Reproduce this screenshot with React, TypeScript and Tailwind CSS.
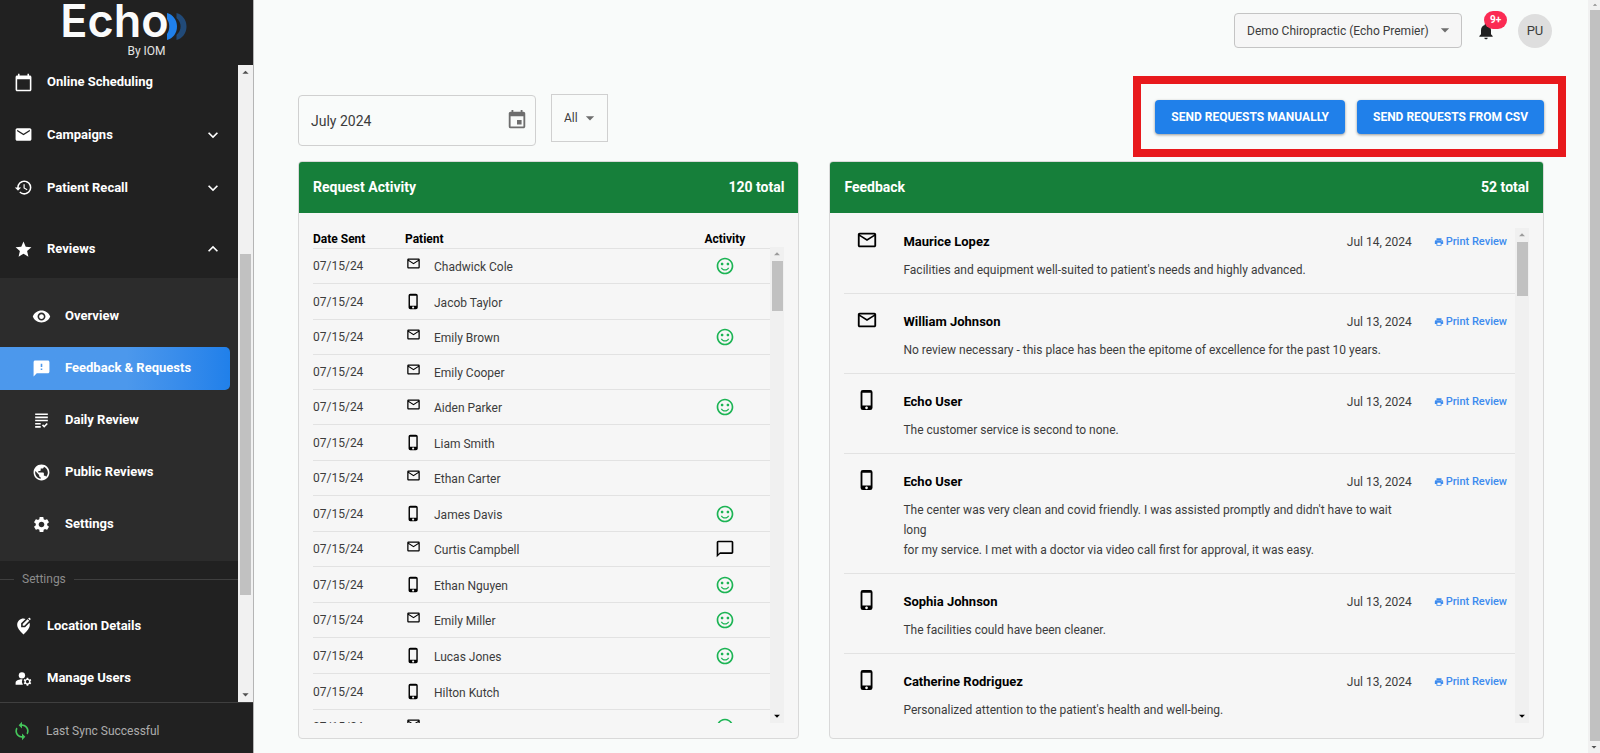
import type { ReactNode } from "react";
import type { IconType } from "react-icons";
import {
  MdArrowDropDown,
  MdArrowDropUp,
  MdCalendarToday,
  MdChatBubbleOutline,
  MdEditLocationAlt,
  MdEmail,
  MdEvent,
  MdExpandLess,
  MdExpandMore,
  MdFeedback,
  MdGrading,
  MdHistory,
  MdLoop,
  MdMailOutline,
  MdManageAccounts,
  MdNotifications,
  MdPhoneIphone,
  MdPrint,
  MdPublic,
  MdSentimentSatisfiedAlt,
  MdSettings,
  MdStar,
  MdVisibility,
} from "react-icons/md";

type Channel = "mail" | "phone";
type Activity = "happy" | "comment" | null;

const requests: { name: string; channel: Channel; activity: Activity }[] = [
  { name: "Chadwick Cole", channel: "mail", activity: "happy" },
  { name: "Jacob Taylor", channel: "phone", activity: null },
  { name: "Emily Brown", channel: "mail", activity: "happy" },
  { name: "Emily Cooper", channel: "mail", activity: null },
  { name: "Aiden Parker", channel: "mail", activity: "happy" },
  { name: "Liam Smith", channel: "phone", activity: null },
  { name: "Ethan Carter", channel: "mail", activity: null },
  { name: "James Davis", channel: "phone", activity: "happy" },
  { name: "Curtis Campbell", channel: "mail", activity: "comment" },
  { name: "Ethan Nguyen", channel: "phone", activity: "happy" },
  { name: "Emily Miller", channel: "mail", activity: "happy" },
  { name: "Lucas Jones", channel: "phone", activity: "happy" },
  { name: "Hilton Kutch", channel: "phone", activity: null },
  { name: "Ava Perez", channel: "mail", activity: "happy" },
];

const feedback: { name: string; channel: Channel; date: string; text: string }[] = [
  {
    name: "Maurice Lopez",
    channel: "mail",
    date: "Jul 14, 2024",
    text: "Facilities and equipment well-suited to patient's needs and highly advanced.",
  },
  {
    name: "William Johnson",
    channel: "mail",
    date: "Jul 13, 2024",
    text: "No review necessary - this place has been the epitome of excellence for the past 10 years.",
  },
  {
    name: "Echo User",
    channel: "phone",
    date: "Jul 13, 2024",
    text: "The customer service is second to none.",
  },
  {
    name: "Echo User",
    channel: "phone",
    date: "Jul 13, 2024",
    text: "The center was very clean and covid friendly. I was assisted promptly and didn't have to wait long\nfor my service. I met with a doctor via video call first for approval, it was easy.",
  },
  {
    name: "Sophia Johnson",
    channel: "phone",
    date: "Jul 13, 2024",
    text: "The facilities could have been cleaner.",
  },
  {
    name: "Catherine Rodriguez",
    channel: "phone",
    date: "Jul 13, 2024",
    text: "Personalized attention to the patient's health and well-being.",
  },
];

function NavLink({ icon: Icon, label, expand }: { icon: IconType; label: string; expand?: "more" | "less" }) {
  const content = (
    <>
      <Icon className="size-[19px] shrink-0" />
      <span className="grow text-left">{label}</span>
      {expand === "more" && <MdExpandMore className="size-5" />}
      {expand === "less" && <MdExpandLess className="size-5" />}
    </>
  );
  const style = "flex h-full w-full items-center gap-3.5 pl-3.5 pr-[15px]";
  return expand ? (
    <button type="button" aria-expanded={expand === "less"} className={style}>
      {content}
    </button>
  ) : (
    <a href="#" className={style}>
      {content}
    </a>
  );
}

function SubLink({ icon: Icon, label, active }: { icon: IconType; label: string; active?: boolean }) {
  return (
    <li className="flex h-[52px] items-center">
      <a
        href="#"
        aria-current={active ? "page" : undefined}
        className={
          active
            ? "mr-2 flex h-[43px] grow items-center gap-3.5 rounded-r-[5px] bg-linear-to-r from-[#4c98ec] from-55% to-[#2080ea] pl-8"
            : "mr-2 flex h-[43px] grow items-center gap-3.5 pl-8"
        }
      >
        <Icon className="size-[19px] shrink-0" />
        {label}
      </a>
    </li>
  );
}

function Logo() {
  return (
    <div className="flex h-[65px] shrink-0 flex-col items-center">
      <div className="flex h-[42px] items-center pr-1.5">
        <span className="font-[Inter] text-[45px] leading-[42px] font-semibold text-[#fafbfb]">Echo</span>
        <svg viewBox="0 0 20 27" className="mt-2.5 -ml-0.5 h-[27px] w-5" aria-hidden="true">
          <path d="M0 0C6 1.500 10 7 10 13.500S6 25.500 0 27v-6c3-4.500 3-10.500 0-15z" fill="#2080ea" />
          <path d="M9.500 0c6 1.500 10 7 10 13.500s-4 12-10 13.500v-5c5.500-5 5.500-12 0-17z" fill="#214a78" />
        </svg>
      </div>
      <span className="mt-px ml-[40px] text-[12px] leading-4 text-[#e4e4e4]">By IOM</span>
    </div>
  );
}

function Sidebar() {
  return (
    <aside className="flex w-[254px] shrink-0 flex-col border-r border-[#b5b5b5] bg-[#212121] text-white">
      <Logo />
      <div className="flex min-h-0 grow">
        <nav className="grow overflow-hidden text-[13px] font-bold">
          <div className="mb-[9px] h-[34px]">
            <NavLink icon={MdCalendarToday} label="Online Scheduling" />
          </div>
          <div className="h-[53px]">
            <NavLink icon={MdEmail} label="Campaigns" expand="more" />
          </div>
          <div className="h-[53px]">
            <NavLink icon={MdHistory} label="Patient Recall" expand="more" />
          </div>
          <div className="mt-1.5 h-[58px]">
            <NavLink icon={MdStar} label="Reviews" expand="less" />
          </div>
          <ul className="bg-[#2c2c2c] pt-3 pb-[11px]">
            <SubLink icon={MdVisibility} label="Overview" />
            <SubLink icon={MdFeedback} label="Feedback & Requests" active />
            <SubLink icon={MdGrading} label="Daily Review" />
            <SubLink icon={MdPublic} label="Public Reviews" />
            <SubLink icon={MdSettings} label="Settings" />
          </ul>
          <div className="mb-[3px] flex h-9 items-center gap-2 text-[12px] font-normal text-[#8c8c8c]">
            <span className="h-px w-3.5 bg-[#3f3f3f]" />
            Settings
            <span className="h-px grow bg-[#3f3f3f]" />
          </div>
          <div className="h-[52px]">
            <NavLink icon={MdEditLocationAlt} label="Location Details" />
          </div>
          <div className="h-[52px]">
            <NavLink icon={MdManageAccounts} label="Manage Users" />
          </div>
        </nav>
        <div className="flex w-[15px] shrink-0 flex-col items-center bg-[#f1f1f1]" aria-hidden="true">
          <MdArrowDropUp className="size-[15px] shrink-0 text-[#505050]" />
          <div className="h-[174px]" />
          <div className="h-[341px] w-[11px] bg-[#c1c1c1]" />
          <MdArrowDropDown className="mt-auto size-[15px] shrink-0 text-[#505050]" />
        </div>
      </div>
      <div className="flex h-[51px] shrink-0 items-center gap-3.5 border-t border-[#3f3f3f] pt-1.5 pl-3 text-[12px] text-[#adadad]">
        <MdLoop className="size-5 text-[#45c75b]" />
        Last Sync Successful
      </div>
    </aside>
  );
}

function ChannelIcon({ channel, large }: { channel: Channel; large?: boolean }) {
  if (channel === "mail") {
    return <MdMailOutline title="Email" className={large ? "-mt-1 size-[22px]" : "-mt-1.5 size-[15px]"} />;
  }
  return <MdPhoneIphone title="Text message" className={large ? "-mt-1 size-[22px]" : "size-[19px]"} />;
}

function ListScrollbar({ thumb }: { thumb: ReactNode }) {
  return (
    <div className="flex w-[14px] shrink-0 flex-col items-center bg-[#f0f0f0]" aria-hidden="true">
      <MdArrowDropUp className="size-3.5 shrink-0 text-[#9b9b9b]" />
      {thumb}
      <MdArrowDropDown className="mt-auto size-3.5 shrink-0 text-black" />
    </div>
  );
}

function CardHeader({ title, total }: { title: string; total: string }) {
  return (
    <header className="flex h-[51px] shrink-0 items-center justify-between bg-[#167f3a] px-3.5 text-[14px] font-bold text-white">
      <h2>{title}</h2>
      <span>{total}</span>
    </header>
  );
}

function RequestActivity() {
  return (
    <section className="flex min-h-0 flex-col overflow-hidden rounded-[4px] border border-[#d9d9d9] bg-[#f6f6f6]">
      <CardHeader title="Request Activity" total="120 total" />
      <div className="mr-3.5 mb-[15px] ml-3.5 flex min-h-0 grow pt-[15px]">
        <div className="min-h-0 grow overflow-hidden">
          <table className="w-full table-fixed border-collapse text-[12px] text-[#3c3c3c]">
            <colgroup>
              <col className="w-[92px]" />
              <col className="w-[29px]" />
              <col />
              <col className="w-[91px]" />
            </colgroup>
            <thead className="text-black">
              <tr className="h-5 border-b border-[#e2e2e2]">
                <th className="p-0 pt-0.5 text-left font-bold">Date Sent</th>
                <th colSpan={2} className="p-0 pt-0.5 text-left font-bold">
                  Patient
                </th>
                <th className="p-0 pt-0.5 text-center font-bold">Activity</th>
              </tr>
            </thead>
            <tbody>
              {requests.map((r) => (
                <tr
                  key={r.name}
                  className={r.channel === "phone" ? "h-9 border-b border-[#e2e2e2]" : "h-[35px] border-b border-[#e2e2e2]"}
                >
                  <td className="p-0">07/15/24</td>
                  <td className="p-0 text-black">
                    <div className="flex w-[17px] justify-center">
                      <ChannelIcon channel={r.channel} />
                    </div>
                  </td>
                  <td className="p-0 pt-0.5">{r.name}</td>
                  <td className="p-0">
                    {r.activity === "happy" && (
                      <MdSentimentSatisfiedAlt title="Positive" className="mx-auto size-5 text-[#1cb454]" />
                    )}
                    {r.activity === "comment" && (
                      <MdChatBubbleOutline title="Comment" className="mx-auto size-5 text-black" />
                    )}
                  </td>
                </tr>
              ))}
            </tbody>
          </table>
        </div>
        <div className="flex pt-[19px]">
          <ListScrollbar thumb={<div className="h-[50px] w-[11px] bg-[#c1c1c1]" />} />
        </div>
      </div>
    </section>
  );
}

function Feedback() {
  return (
    <section className="flex min-h-0 flex-col overflow-hidden rounded-[4px] border border-[#d9d9d9] bg-[#f6f6f6]">
      <CardHeader title="Feedback" total="52 total" />
      <div className="mr-3.5 mb-[15px] ml-3.5 flex min-h-0 grow">
        <ul className="min-h-0 grow overflow-hidden pt-px">
          {feedback.map((f, i) => (
            <li key={i} className="flex border-b border-[#e2e2e2] pt-[18px] pr-2 pb-[13px]">
              <div className="flex h-5 w-[59px] shrink-0 items-center pl-3 text-black">
                <ChannelIcon channel={f.channel} large />
              </div>
              <div className="grow">
                <div className="flex h-5 items-center">
                  <h3 className="grow text-[13px] font-bold text-black">{f.name}</h3>
                  <time className="text-[12px] text-[#3c3c3c]">{f.date}</time>
                  <button type="button" className="ml-[22px] flex items-center gap-0.5 text-[11px] font-medium text-[#3d8bee]">
                    <MdPrint className="size-2.5" />
                    Print Review
                  </button>
                </div>
                <p className="mt-2 max-w-[510px] text-[12px] leading-5 whitespace-pre-line text-[#3c3c3c]">{f.text}</p>
              </div>
            </li>
          ))}
        </ul>
        <div className="flex pt-[15px]">
          <ListScrollbar thumb={<div className="h-[54px] w-[11px] bg-[#c1c1c1]" />} />
        </div>
      </div>
    </section>
  );
}

function TopBar() {
  return (
    <div className="flex h-[61px] shrink-0 items-center justify-end pr-9">
      <div className="relative">
        <select
          aria-label="Location"
          className="h-[35px] w-[228px] appearance-none rounded-[4px] border border-[#c4c4c4] bg-[#f6f6f6] pl-3 text-[12px] text-[#3c3c3c]"
        >
          <option>Demo Chiropractic (Echo Premier)</option>
        </select>
        <MdArrowDropDown className="pointer-events-none absolute top-[7px] right-[7px] size-5 text-[#6e6e6e]" />
      </div>
      <button type="button" aria-label="Notifications" className="relative ml-3.5 text-[#212121]">
        <MdNotifications className="size-5" />
        <span className="absolute -top-2.5 left-2 flex h-[18px] w-[23px] items-center justify-center rounded-full bg-[#fb2b53] text-[10px] font-bold text-white">
          9+
        </span>
      </button>
      <button
        type="button"
        aria-label="Account"
        className="ml-[22px] flex size-[34px] items-center justify-center rounded-full bg-[#dedede] text-[13px] text-[#3c3c3c]"
      >
        PU
      </button>
    </div>
  );
}

function Toolbar() {
  const button =
    "h-[34px] rounded-[4px] bg-[#2080ea] px-4 text-[12px] font-bold text-white shadow-[0_1px_3px_rgba(0,0,0,0.4)]";
  return (
    <div className="flex h-[100px] shrink-0 items-start pt-[33px]">
      <div className="relative mt-px w-[238px]">
        <input
          aria-label="Month"
          defaultValue="July 2024"
          className="h-[51px] w-full rounded-[4px] border border-[#d0d0d0] bg-transparent pl-3 text-[14px] text-[#3c3c3c]"
        />
        <MdEvent className="pointer-events-none absolute top-3.5 right-2 size-[22px] text-[#6e6e6e]" />
      </div>
      <div className="relative ml-[15px]">
        <select
          aria-label="Filter"
          className="h-12 w-[57px] appearance-none border border-[#d0d0d0] bg-transparent pl-3 text-[12px] text-[#3c3c3c]"
        >
          <option>All</option>
        </select>
        <MdArrowDropDown className="pointer-events-none absolute top-3.5 right-2 size-5 text-[#6e6e6e]" />
      </div>
      <div className="relative mt-1.5 ml-auto flex gap-3">
        <button type="button" className={button}>
          SEND REQUESTS MANUALLY
        </button>
        <button type="button" className={button}>
          SEND REQUESTS FROM CSV
        </button>
        <div className="pointer-events-none absolute -inset-x-[22px] -top-6 -bottom-[23px] border-8 border-[#e8191c]" />
      </div>
    </div>
  );
}

export default function App() {
  return (
    <div className="flex h-screen overflow-hidden bg-[#f9fbfa] font-[Roboto,sans-serif]">
      <Sidebar />
      <main className="flex min-w-0 grow flex-col pl-11">
        <TopBar />
        <div className="mr-11 flex min-h-0 grow flex-col">
          <Toolbar />
          <div className="mb-3.5 grid min-h-0 grow grid-cols-[501fr_714fr] grid-rows-[minmax(0,1fr)] gap-[30px]">
            <RequestActivity />
            <Feedback />
          </div>
        </div>
      </main>
      <div className="flex w-3 shrink-0 flex-col items-end bg-[#f1f1f1]" aria-hidden="true">
        <MdArrowDropUp className="size-2.5 shrink-0 text-[#8b8b8b]" />
        <div className="w-2.5 grow bg-[#c1c1c1]" />
        <MdArrowDropDown className="size-3 shrink-0 text-[#505050]" />
      </div>
    </div>
  );
}
